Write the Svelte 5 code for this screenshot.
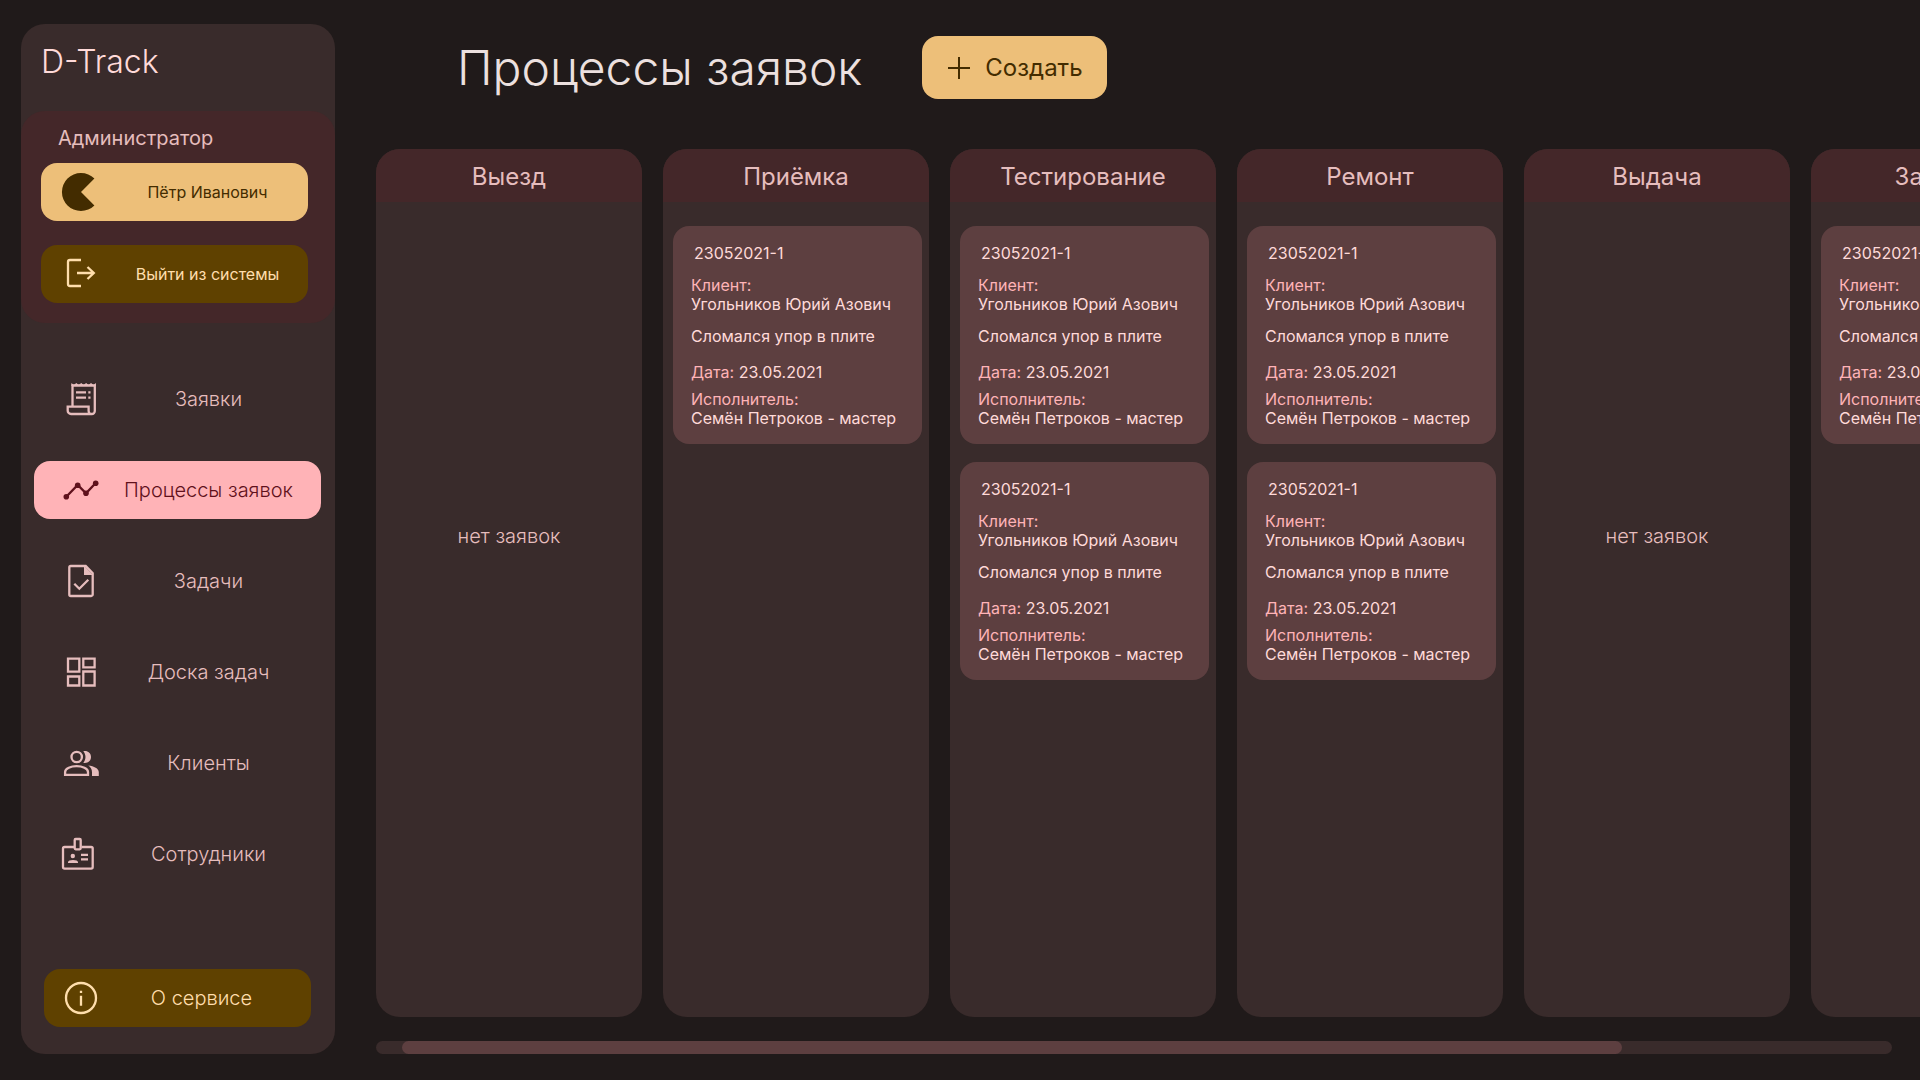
<script>
  const nav = [
    { id: 'requests', label: 'Заявки' },
    { id: 'processes', label: 'Процессы заявок', active: true },
    { id: 'tasks', label: 'Задачи' },
    { id: 'board', label: 'Доска задач' },
    { id: 'clients', label: 'Клиенты' },
    { id: 'staff', label: 'Сотрудники' }
  ];

  const request = {
    number: '23052021-1',
    client: 'Угольников Юрий Азович',
    problem: 'Сломался упор в плите',
    date: '23.05.2021',
    worker: 'Семён Петроков - мастер'
  };

  const columns = [
    { title: 'Выезд', cards: [] },
    { title: 'Приёмка', cards: [request] },
    { title: 'Тестирование', cards: [request, request] },
    { title: 'Ремонт', cards: [request, request] },
    { title: 'Выдача', cards: [] },
    { title: 'Закрыто', cards: [request] }
  ];
</script>

{#snippet icon(id)}
  <svg class="icon" viewBox="0 0 40 40" aria-hidden="true">
    {#if id === 'user'}
      <path class="solid" d="M20 20 33.4 6.6A19 19 0 1 0 33.4 33.4Z" />
    {:else if id === 'logout'}
      <path d="M20 6H9a2 2 0 0 0-2 2v22a2 2 0 0 0 2 2h11M16 19h17M26.5 13l6.3 6-6.3 6" />
    {:else if id === 'requests'}
      <path d="M11.5 27V6.5H33.8V32a3 3 0 0 1-3 3H10a3.3 3.3 0 0 1-3.3-3.3V27.7H27.6V32a3 3 0 0 0 3 3" />
      <path class="solid" d="M10.4 7V4l2.5 2 2.4-2 2.5 2 2.4-2 2.5 2 2.4-2 2.5 2 2.4-2 2.5 2 2.4-2v3Z" />
      <path d="M15 13.3h10M27.3 13.3h2.2M15 18.7h10M27.3 18.7h2.2" />
    {:else if id === 'processes'}
      <path d="M5.3 26.7 16.7 15l8.3 8.3L34.7 13" />
      <g class="solid">
        <circle cx="5.3" cy="26.7" r="2.8" /><circle cx="16.7" cy="15.2" r="2.8" />
        <circle cx="25" cy="23.2" r="2.8" /><circle cx="34.7" cy="13.2" r="2.8" />
      </g>
    {:else if id === 'tasks'}
      <path d="M24.7 5H9.8A1.5 1.5 0 0 0 8.3 6.5V33.5A1.5 1.5 0 0 0 9.8 35H30.2A1.5 1.5 0 0 0 31.7 33.5V12.3ZM13.3 22.7l5 5 9-9" />
      <path class="solid" d="M23 4.5V14H32Z" />
    {:else if id === 'board'}
      <path d="M7 6.7h11.3v13H7ZM22.3 6.7h11.3v8.7H22.3ZM22.3 19.5h11.3v14H22.3ZM7 24.5h11.3v9H7Z" />
    {:else if id === 'clients'}
      <circle cx="15.7" cy="14" r="5.2" />
      <path d="M4.1 31.9V29C4.1 25.5 10 23.2 15.6 23.2S27 25.5 27 29v2.9Z" />
      <path class="solid" d="M22.3 8.2C26.5 7.3 30 10 30 14s-3.5 6.7-7.7 5.8C25.2 16.5 25.2 11.5 22.3 8.2ZM27.3 22.6C33 23.3 37.8 25.5 37.8 29.3V33H31V29.3C31 26.3 29.5 24.2 27.3 22.6Z" />
    {:else if id === 'staff'}
      <path d="M13 13H3.6A1.6 1.6 0 0 0 2 14.6V33.1A1.6 1.6 0 0 0 3.6 34.7H30.1A1.6 1.6 0 0 0 31.7 33.1V14.6A1.6 1.6 0 0 0 30.1 13H20.5" />
      <rect x="13.7" y="5" width="6" height="10.3" rx="1" />
      <path d="M20 20.8h7M20 25.3h7" />
      <path class="solid" d="M7 29v-.7c0-1.5 2.2-2.3 5-2.3s5 .8 5 2.3v.7Z" />
      <circle class="solid" cx="11.8" cy="22" r="2.2" />
    {:else if id === 'about'}
      <circle cx="20" cy="20" r="15" />
      <path d="M20 17.7v10M20 12.7v2.2" />
    {/if}
  </svg>
{/snippet}

<div class="app">
  <aside class="sidebar">
    <div class="brand">D-Track</div>

    <section class="account">
      <h2>Администратор</h2>
      <button class="item profile" type="button">{@render icon('user')}<span>Пётр Иванович</span></button>
      <button class="item logout" type="button">{@render icon('logout')}<span>Выйти из системы</span></button>
    </section>

    <nav>
      {#each nav as entry}
        <a class="item link" class:active={entry.active} href={'#' + entry.id} aria-current={entry.active ? 'page' : undefined}>
          {@render icon(entry.id)}<span>{entry.label}</span>
        </a>
      {/each}
    </nav>

    <a class="item about" href="#about">{@render icon('about')}<span>О сервисе</span></a>
  </aside>

  <main>
    <header>
      <h1>Процессы заявок</h1>
      <button class="create" type="button">
        <svg viewBox="0 0 24 24" aria-hidden="true"><path d="M12 1v22M1 12h22" /></svg>
        Создать
      </button>
    </header>

    <div class="columns">
      {#each columns as column}
        <section class="column">
          <h2>{column.title}</h2>
          {#if column.cards.length}
            <div class="cards">
              {#each column.cards as card}
                <article>
                  <h3>{card.number}</h3>
                  <p><b>Клиент:</b><br />{card.client}</p>
                  <p class="problem">{card.problem}</p>
                  <p class="date"><b>Дата:</b> {card.date}</p>
                  <p><b>Исполнитель:</b><br />{card.worker}</p>
                </article>
              {/each}
            </div>
          {:else}
            <p class="empty">нет заявок</p>
          {/if}
        </section>
      {/each}
    </div>

    <div class="track"><div class="thumb"></div></div>
  </main>
</div>

<style>
  :global(body) {
    background: #201a1a;
  }
  .app {
    box-sizing: border-box;
    display: flex;
    gap: 41px;
    min-height: 100vh;
    padding: 24px 0 26px 21px;
    overflow: hidden;
    background: #201a1a;
    color: #ffdad9;
    font-family: Inter, 'Liberation Sans', sans-serif;
    font-optical-sizing: none;
  }
  h1, h2, h3, p {
    margin: 0;
  }
  button {
    border: 0;
    font-family: inherit;
    cursor: pointer;
  }
  .sidebar {
    flex: none;
    display: flex;
    flex-direction: column;
    width: 314px;
    border-radius: 24px;
    background: #392b2b;
  }
  .brand {
    padding: 18px 20px 29px;
    font-size: 32px;
    font-weight: 300;
    line-height: 40px;
  }
  .account {
    display: flex;
    flex-direction: column;
    padding: 13px 27px 20px 20px;
    border-radius: 24px;
    background: #442729;
  }
  .account h2 {
    padding: 0 17px;
    margin-bottom: 11px;
    color: #e6bdbd;
    font-size: 20px;
    font-weight: 400;
    line-height: 28px;
  }
  .item {
    box-sizing: border-box;
    display: flex;
    align-items: center;
    gap: 6px;
    height: 58px;
    padding: 0 0 0 20px;
    border-radius: 16px;
    font-size: 20px;
    font-weight: 300;
    line-height: 28px;
    text-decoration: none;
  }
  .item span {
    flex: 1;
    text-align: center;
    white-space: nowrap;
  }
  .icon {
    flex: none;
    width: 40px;
    height: 40px;
    fill: none;
    stroke: currentColor;
    stroke-width: 2.3;
  }
  .solid {
    fill: currentColor;
    stroke: none;
  }
  .profile,
  .logout {
    font-size: 16px;
    font-weight: 400;
  }
  .profile {
    margin-bottom: 24px;
    background: #edbf79;
    color: #432c00;
  }
  .logout,
  .about {
    background: #5f4100;
    color: #ffdeac;
  }
  nav {
    display: flex;
    flex-direction: column;
    gap: 33px;
    padding: 47px 14px 0 13px;
  }
  .link {
    padding: 0 11px 0 27px;
    color: #e6bdbd;
  }
  .active {
    background: #ffb3b7;
    color: #5f111c;
  }
  .about {
    margin: auto 24px 27px 23px;
    padding: 0 15px 0 17px;
  }
  main {
    flex: 1;
    min-width: 0;
    display: flex;
    flex-direction: column;
  }
  header {
    display: flex;
    align-items: center;
    gap: 60px;
    padding: 12px 0 50px 81px;
  }
  h1 {
    color: #ece0df;
    font-size: 48px;
    font-weight: 300;
    line-height: 56px;
  }
  .create {
    display: flex;
    align-items: center;
    gap: 14px;
    height: 63px;
    padding: 0 24px 0 25px;
    border-radius: 16px;
    background: #edbf79;
    color: #432c00;
    font-size: 24px;
    font-weight: 400;
  }
  .create svg {
    width: 24px;
    height: 24px;
    fill: none;
    stroke: currentColor;
    stroke-width: 2;
  }
  .columns {
    flex: 1;
    display: flex;
    gap: 21px;
    overflow: hidden;
  }
  .column {
    flex: none;
    width: 266px;
    border-radius: 24px;
    overflow: hidden;
    background: #392b2b;
  }
  .column h2 {
    padding: 12px 0 9px;
    background: #442729;
    color: #e6bdbd;
    font-size: 24px;
    font-weight: 400;
    line-height: 32px;
    text-align: center;
  }
  .cards {
    display: flex;
    flex-direction: column;
    gap: 18px;
    padding: 24px 7px 24px 10px;
  }
  article {
    padding: 18px 18px 16px;
    border-radius: 16px;
    background: #5d3f40;
    font-size: 16px;
    line-height: 19px;
    white-space: nowrap;
  }
  h3 {
    padding: 0 3px;
    margin-bottom: 13px;
    font-size: 16px;
    font-weight: 400;
  }
  b {
    color: #ffb3b7;
    font-weight: 400;
  }
  .problem {
    margin: 13px 0 17px;
  }
  .date {
    margin-bottom: 8px;
  }
  .empty {
    padding-top: 320px;
    color: #e6bdbd;
    font-size: 20px;
    font-weight: 300;
    line-height: 28px;
    text-align: center;
  }
  .track {
    height: 13px;
    margin: 24px 28px 0 0;
    border-radius: 8px;
    background: #392b2b;
  }
  .thumb {
    width: 80.5%;
    height: 100%;
    margin-left: 1.7%;
    border-radius: 8px;
    background: #5d3f40;
  }
</style>
